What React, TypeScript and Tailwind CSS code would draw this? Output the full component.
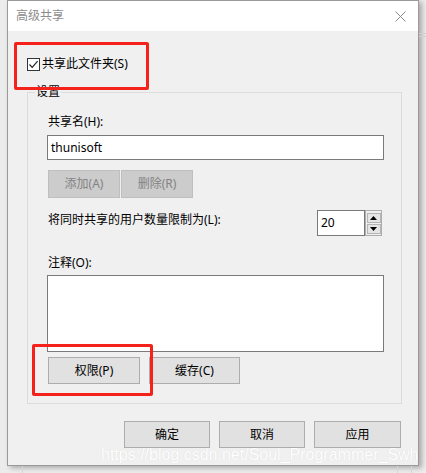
import React from "react";

const font = "font-['Noto_Sans','Noto_Sans_CJK_SC',sans-serif]";

function Btn({ label, w, disabled }: { label: string; w: string; disabled?: boolean }) {
  return (
    <div
      className={`${w} h-full flex items-center justify-center border text-[12px] leading-none ${
        disabled
          ? "bg-[#cccccc] border-[#bfbfbf] text-[#838383]"
          : "bg-[#e1e1e1] border-[#adadad] text-[#000]"
      }`}
    >
      {label}
    </div>
  );
}

export default function App() {
  return (
    <div className={`relative w-[426px] h-[473px] overflow-hidden bg-[#ececec] ${font}`}>
      {/* behind-window hints */}
      <div className="absolute left-[419px] top-[33px] w-[7px] h-[4px] border-y border-[#d0d0d0]" />
      <div className="absolute left-[22px] top-[466px] w-px h-[7px] bg-[#d6d6d6]" />
      <div className="absolute left-[397px] top-[466px] w-px h-[7px] bg-[#d6d6d6]" />
      <div className="absolute left-[411px] top-[466px] w-px h-[7px] bg-[#d6d6d6]" />

      <div className="ml-[7px] w-[412px] h-[466px] border border-[#9a9a9a] bg-[#f0f0f0] flex flex-col shadow-[3px_2px_5px_rgba(0,0,0,0.28)]">
        {/* title bar */}
        <div className="h-[30px] bg-white flex items-center justify-between pl-[8px] pr-[10px] shrink-0">
          <span className="text-[12px] text-[#8c8c8c] leading-none">高级共享</span>
          <svg width="11" height="11" viewBox="0 0 11 11" className="mr-[2px]">
            <path d="M0.5 0.5 L10.5 10.5 M10.5 0.5 L0.5 10.5" stroke="#8a8a8a" strokeWidth="1" fill="none" />
          </svg>
        </div>

        {/* body */}
        <div className="flex flex-col pl-[19px] pr-[16px]">
          <div className="mt-[25px] h-[16px] flex items-center">
            <div className="w-[13px] h-[13px] border border-[#333] bg-white flex items-center justify-center">
              <svg width="11" height="11" viewBox="0 0 11 11">
                <path d="M1.5 5.5 L4.2 8.3 L9.6 2.2" stroke="#222" strokeWidth="1.2" fill="none" />
              </svg>
            </div>
            <span className="ml-[2px] text-[12px] leading-none text-black">共享此文件夹(S)</span>
          </div>

          {/* group box */}
          <div className="relative mt-[20px] border border-[#dcdcdc] h-[312px] pl-[19px] pr-[17px] pt-[21px] flex flex-col">
            <span className="absolute left-[7px] top-[-7px] bg-[#f0f0f0] px-px text-[12px] leading-none text-black">设置</span>
            <div className="h-[16px] flex items-center ml-px text-[12px] leading-none text-black">共享名(H):</div>
            <div className="mt-[5px] h-[25px] border border-[#7a7a7a] bg-white flex items-center pl-[3px] text-[12px] text-black">
              thunisoft
            </div>
            <div className="mt-[10px] h-[28px] flex ml-px gap-px">
              <Btn label="添加(A)" w="w-[72px]" disabled />
              <Btn label="删除(R)" w="w-[72px]" disabled />
            </div>
            <div className="mt-[12px] h-[26px] flex items-start justify-between">
              <span className="mt-[2px] h-[16px] flex items-center ml-px text-[12px] leading-none text-black">
                将同时共享的用户数量限制为(L):
              </span>
              <div className="flex h-[26px] mr-[2px]">
                <div className="w-[48px] h-full border border-[#7a7a7a] bg-white flex items-center pl-[3px] text-[12px] text-black">
                  20
                </div>
                <div className="w-[17px] h-full border border-[#adadad] bg-[#f0f0f0] flex flex-col items-center justify-center gap-px">
                  <div className="w-[14px] h-[10px] bg-[#e5e5e5] border border-[#b5b5b5] flex items-center justify-center">
                    <svg width="7" height="4" viewBox="0 0 7 4">
                      <path d="M0 4 L3.5 0 L7 4 Z" fill="#000" />
                    </svg>
                  </div>
                  <div className="w-[14px] h-[10px] bg-[#e5e5e5] border border-[#b5b5b5] flex items-center justify-center">
                    <svg width="7" height="4" viewBox="0 0 7 4">
                      <path d="M0 0 L7 0 L3.5 4 Z" fill="#000" />
                    </svg>
                  </div>
                </div>
              </div>
            </div>
            <div className="mt-[19px] h-[16px] flex items-center ml-px text-[12px] leading-none text-black">注释(O):</div>
            <div className="mt-[4px] h-[77px] border border-[#7a7a7a] bg-white" />
            <div className="mt-[5px] h-[27px] flex ml-px gap-[9px]">
              <Btn label="权限(P)" w="w-[92px]" />
              <Btn label="缓存(C)" w="w-[91px]" />
            </div>
          </div>

          {/* bottom buttons */}
          <div className="mt-[17px] h-[27px] flex justify-end gap-[9px] pr-px">
            <Btn label="确定" w="w-[86px]" />
            <Btn label="取消" w="w-[86px]" />
            <Btn label="应用" w="w-[87px]" />
          </div>
        </div>
      </div>

      {/* annotations */}
      <div className="absolute left-[14px] top-[42px] w-[135px] h-[48px] border-[3px] border-[#f5211b] rounded-[2px]" />
      <div className="absolute left-[32px] top-[344px] w-[121px] h-[52px] border-[3px] border-[#f5211b] rounded-[2px]" />

      {/* watermark */}
      <div className="absolute left-[101px] top-[445px] font-['Liberation_Sans',sans-serif] text-[16px] leading-[20px] text-white [text-shadow:0_0_1px_rgba(0,0,0,0.12)] whitespace-nowrap">
        https://blog.csdn.net/Soul_Programmer_Swh
      </div>
    </div>
  );
}
